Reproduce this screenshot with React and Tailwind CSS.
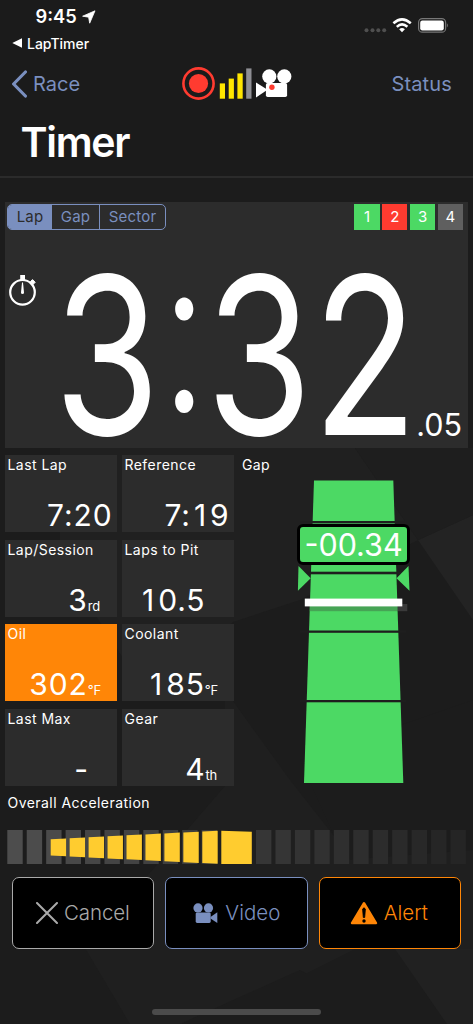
import React from 'react';

const TILES = [
  { label: 'Last Lap', value: '7:20', pad: 'pr-[4.5px]' },
  { label: 'Reference', value: '7:19', pad: 'pr-[4.5px]' },
  { label: 'Lap/Session', value: '3', unit: 'rd', pad: 'pr-[17px]' },
  { label: 'Laps to Pit', value: '10.5', pad: 'pr-[28.5px]' },
  { label: 'Oil', value: '302', unit: '°F', pad: 'pr-[16px]', alert: true },
  { label: 'Coolant', value: '185', unit: '°F', pad: 'pr-[16px]' },
  { label: 'Last Max', value: '-', pad: 'pr-[28px]' },
  { label: 'Gear', value: '4', unit: 'th', pad: 'pr-[17px]' },
];

const SECTORS = [
  { id: 1, color: 'bg-[#4cd964]' },
  { id: 2, color: 'bg-[#ff3b30]' },
  { id: 3, color: 'bg-[#4cd964]' },
  { id: 4, color: 'bg-[#5f5f5f]' },
];

const Backdrop = () => (
  <svg className="absolute inset-0 h-full w-full" viewBox="0 0 473 1024">
    <rect width="473" height="1024" fill="#1c1c1c" />
    <path d="M60 448H355L418 540L300 600L233 622L150 700L60 560Z" fill="#202020" />
    <path d="M418 540L473 515V620Z" fill="#232323" />
    <path d="M418 540L473 515V448H355Z" fill="#1e1e1e" />
    <path d="M225 690L290 780L345 850L473 830V1024H400L300 970L180 1024H130L85 948L225 786Z" fill="#1f1f1f" />
    <path d="M233 1010L355 949H395L447 1024H233Z" fill="#1c1c1c" />
    <path d="M395 949H473V1024H447Z" fill="#212121" />
    <path d="M300 760L473 700V850L345 860Z" fill="#1c1c1c" />
  </svg>
);

const StatusBar = () => (
  <div className="flex h-[62px] justify-between">
    <div className="pl-3">
      <div className="flex h-[33px] items-center pl-[23.5px]">
        <span className="text-[18.3px] font-semibold">9:45</span>
        <svg className="ml-[5px] h-[14px] w-[14px]" viewBox="0 0 14 14">
          <path d="M13 0.8L0.6 6.2L6.6 7.2L7.7 13.2Z" fill="#fff" stroke="#fff" strokeWidth="0.8" strokeLinejoin="round" />
        </svg>
      </div>
      <div className="flex h-[20px] items-center gap-[5px]">
        <svg className="h-[10px] w-[10px]" viewBox="0 0 10 10"><path d="M0.3 5L10 0.2V9.8Z" fill="#fff" /></svg>
        <span className="text-[14px] font-medium tracking-[0px]">LapTimer</span>
      </div>
    </div>
    <svg className="mt-[14px] mr-[23px] h-[22px] w-[86px]" viewBox="364 14 86 22">
      <g fill="#4f4f4f">
        <circle cx="366.5" cy="30.3" r="2" />
        <circle cx="372.5" cy="30.3" r="2" />
        <circle cx="378.3" cy="30.3" r="2" />
        <circle cx="384.2" cy="30.3" r="2" />
      </g>
      <g fill="none" stroke="#fff" strokeWidth="2.5">
        <path d="M393.4 23.3Q402 15.5 410.8 23.3" />
        <path d="M396.8 26.8Q402 22 407.4 26.8" />
      </g>
      <path d="M399.2 29.3Q402 26.8 404.9 29.3L402 32.2Z" fill="#fff" />
      <rect x="418.6" y="18.6" width="27" height="13.6" rx="3.8" fill="none" stroke="#777" strokeWidth="1.2" />
      <rect x="420.2" y="20.5" width="23.6" height="10" rx="2.2" fill="#fff" />
      <path d="M446.9 23.3Q448.8 25.4 446.9 27.5Z" fill="#777" />
    </svg>
  </div>
);

const NavBar = () => (
  <div className="flex h-[44px] items-center justify-between text-[20px] text-[#7a8fbf]">
    <div className="flex w-[180px] items-center pl-[11px]">
      <svg className="h-[28px] w-[17px]" viewBox="0 0 17 28">
        <path d="M14.4 2L2.6 14L14.4 26" fill="none" stroke="#7a8fbf" strokeWidth="3.2" strokeLinecap="round" strokeLinejoin="round" />
      </svg>
      <span className="ml-[5px]">Race</span>
    </div>
    <svg className="h-[36px] w-[112px]" viewBox="181 66 112 36">
      <circle cx="198.5" cy="83.5" r="15.1" fill="none" stroke="#ff3b30" strokeWidth="2.6" />
      <circle cx="198.5" cy="83.5" r="9.6" fill="#ff3b30" />
      <g fill="#ffe600">
        <rect x="219.8" y="83.4" width="5.2" height="15.3" />
        <rect x="228.7" y="78.6" width="5.2" height="20.1" />
        <rect x="237.4" y="73.4" width="5.3" height="25.3" />
      </g>
      <rect x="246.2" y="68.4" width="5.3" height="30.3" fill="#8e8e93" />
      <g fill="#fff">
        <circle cx="269.3" cy="76.4" r="7.1" />
        <circle cx="284.3" cy="76.4" r="7.1" />
        <rect x="265.9" y="83" width="21.2" height="14" rx="1.8" />
        <path d="M256 82.4L266 88.7V90.7L256 97.6Z" />
      </g>
      <circle cx="271.9" cy="87.3" r="2.7" fill="#ff3b30" />
    </svg>
    <div className="w-[180px] pr-[21px] text-right tracking-[0.15px]">Status</div>
  </div>
);

const LapPanel = () => (
  <div className="relative mx-[5px] mt-[24px] h-[246px] bg-[#2c2c2c]">
    <div className="flex justify-between pt-[2px] pr-[5px] pl-[2px]">
      <div className="flex h-[26px] w-[159px] overflow-hidden rounded-[5px] border border-[#7a8fbf] text-[15px] tracking-[0.2px] text-[#7a8fbf]">
        <div className="flex w-[44px] items-center justify-center bg-[#7a8fbf] text-[#2c2c2c]">Lap</div>
        <div className="flex w-[48px] items-center justify-center border-r border-[#7a8fbf]">Gap</div>
        <div className="flex flex-1 items-center justify-center">Sector</div>
      </div>
      <div className="flex gap-[2.5px]">
        {SECTORS.map((s) => (
          <div key={s.id} className={`flex h-[25.5px] w-[25.3px] items-center justify-center text-[15px] ${s.color}`}>{s.id}</div>
        ))}
      </div>
    </div>
    <svg className="absolute top-[72px] left-[3px] h-[34px] w-[30px]" viewBox="8 274 30 34">
      <circle cx="22.5" cy="292.3" r="12.3" fill="none" stroke="#fff" strokeWidth="2.2" />
      <rect x="20.2" y="275" width="4.8" height="5.5" fill="#fff" />
      <path d="M30.3 281.8L32.5 279.6L35.2 282.3L33 284.5Z" fill="#fff" stroke="#fff" />
      <path d="M22 282.5H23L24 292.5A1.5 1.5 0 0 1 21 292.5Z" fill="#fff" />
    </svg>
    <div className="absolute top-[43px] left-[48.5px] origin-left scale-x-[0.78] text-[220px] leading-[220px] whitespace-nowrap">
      3<span className="relative -top-[23px] font-light tracking-[-3px]">:</span><span className="tracking-[1px]">32</span>
    </div>
    <div className="absolute right-[6px] bottom-[4px] text-[30.5px] leading-[38px] font-normal">.05</div>
  </div>
);

// pad the narrow 1 so that digits keep a steady pitch
const Digits = ({ value }) =>
  value.split(/(1)/).map((part, i) => (part === '1' ? <span key={i} className="px-[3px]">1</span> : part));

const Tile = ({ label, value, unit, pad, alert }) => (
  <div className={`flex h-[77px] flex-col justify-between ${alert ? 'bg-[#ff8607]' : 'bg-[#2c2c2c]'}`}>
    <span className="pl-[2.5px] text-[14px] leading-[20px] tracking-[0.45px]">{label}</span>
    <div className={`flex h-[34px] items-baseline justify-end ${pad}`}>
      <span className="text-[30px] leading-[34px] font-normal tracking-[0.9px] whitespace-nowrap">
        <Digits value={value} />
      </span>
      {unit && <span className="text-[13px] leading-none font-normal tracking-[-0.2px]">{unit}</span>}
    </div>
  </div>
);

const GapGauge = () => (
  <div className="relative flex-1">
    <div className="pl-[3px] text-[14px] leading-[20px] tracking-[0.35px]">Gap</div>
    <svg className="absolute top-0 left-0 h-[331px] w-[229px]" viewBox="239 455 229 331">
      <path d="M314 480.5H393.3L403.3 783H304Z" fill="#4cd964" />
      <g fill="#1e1e1e">
        <rect x="300" y="521" width="106" height="2.4" />
        <rect x="300" y="571.7" width="106" height="2.6" />
        <rect x="300" y="630.5" width="106" height="2.3" />
        <rect x="300" y="700" width="106" height="2.3" />
      </g>
      <path d="M298.5 566L310.7 578.3L297.9 590.7Z" fill="#4cd964" />
      <path d="M408.5 566L396.5 578.3L409.5 590.7Z" fill="#4cd964" />
      <rect x="397.4" y="604" width="9.9" height="7.2" fill="#3a3a3a" />
      <rect x="309.8" y="604" width="87.6" height="7.2" fill="#46a455" />
      <rect x="304.8" y="598.6" width="97.5" height="7.8" fill="#fff" />
    </svg>
    <div className="absolute top-[69px] left-[58px] flex h-[41px] w-[113px] items-center justify-center rounded-[6px] border-[3px] border-black bg-[#4cd964] text-[30.5px] font-normal whitespace-nowrap text-white">
      -00.34
    </div>
  </div>
);

// the filled part widens linearly towards the current reading
const topAt = (x) => 9.3 - ((x - 50.7) * 8.6) / 166;
const bottomAt = (x) => 25.6 + ((x - 50.7) * 8.2) / 166;

const Acceleration = () => {
  const cells = Array.from({ length: 22 }, (_, i) => (i < 11 ? 7.3 + i * 19.43 : 256 + (i - 11) * 19.45));
  const bars = Array.from({ length: 9 }, (_, i) => 50.7 + i * 18.95);

  return (
    <div className="pt-[7px]">
      <p className="pl-[7.5px] text-[14px] leading-[20px] tracking-[0.45px]">Overall Acceleration</p>
      <svg className="mt-[17px] h-[34px] w-[473px]" viewBox="0 0 473 34">
        {cells.map((x) => {
          const shade = Math.round(78 - x * 0.092);
          return <rect key={x} x={x} y="0" width="15.4" height="34" fill={`rgb(${shade},${shade},${shade})`} />;
        })}
        {bars.map((x) => (
          <path key={x} d={`M${x} ${topAt(x)}L${x + 15.4} ${topAt(x + 15.4)}V${bottomAt(x + 15.4)}L${x} ${bottomAt(x)}Z`} fill="#ffcc2f" />
        ))}
        <path d="M221.3 0.8L251.8 1.8V34H221.3Z" fill="#ffcc2f" />
      </svg>
    </div>
  );
};

const Actions = () => (
  <div className="mx-[12px] mt-[13px] grid h-[72px] grid-cols-3 gap-[11px] text-[20.5px] font-[350]">
    <button className="flex items-center rounded-[7px] border border-[#aaaaaa] bg-black pl-[23px] text-[#aaaaaa]">
      <svg className="h-[22px] w-[22px]" viewBox="0 0 22 22"><path d="M1 1L21 21M21 1L1 21" stroke="#aaa" strokeWidth="2" strokeLinecap="round" /></svg>
      <span className="ml-[6px] tracking-[-0.1px]">Cancel</span>
    </button>
    <button className="flex items-center rounded-[7px] border border-[#7a8fbf] bg-black pl-[27px] text-[#7a8fbf]">
      <svg className="h-[20px] w-[25px]" viewBox="0 0 25 20" fill="#7a8fbf">
        <circle cx="5" cy="4.9" r="4.6" />
        <circle cx="15.5" cy="4.9" r="4.6" />
        <rect x="2.7" y="9.4" width="15" height="10.5" rx="1.4" />
        <path d="M17.5 14L24.3 9.3V20L17.5 15.5Z" />
      </svg>
      <span className="ml-[7px]">Video</span>
    </button>
    <button className="flex items-center rounded-[7px] border border-[#ff8607] bg-black pl-[30px] text-[#ff8607]">
      <svg className="h-[24px] w-[28px]" viewBox="0 0 28 24">
        <path d="M14 2.2L26 22H2Z" fill="#ff8607" stroke="#ff8607" strokeWidth="2.4" strokeLinejoin="round" />
        <path d="M12.6 8Q14 5.6 15.4 8L14.7 16.5H13.3Z" fill="#000" stroke="#000" strokeWidth="0.8" />
        <circle cx="14" cy="20" r="1.7" fill="#000" />
      </svg>
      <span className="ml-[6px]">Alert</span>
    </button>
  </div>
);

const App = () => {
  return (
    <div className="relative h-[1024px] w-[473px] overflow-hidden bg-[#1c1c1c] font-['Inter',sans-serif] text-white">
      <Backdrop />
      <div className="relative flex h-full flex-col">
        <div className="h-[178px] border-b-2 border-[#2b2b2b] bg-[#1b1b1b]">
          <StatusBar />
          <NavBar />
          <h1 className="pl-[20.5px] text-[41px] leading-[72px] font-semibold tracking-[-1.3px]">Timer</h1>
        </div>
        <LapPanel />
        <div className="mt-[7px] flex h-[331px] gap-[5px] pl-[5px]">
          <div className="grid w-[229px] grid-cols-2 content-start gap-x-[5px] gap-y-[7.6px]">
            {TILES.map((tile) => (
              <Tile key={tile.label} {...tile} />
            ))}
          </div>
          <GapGauge />
        </div>
        <Acceleration />
        <Actions />
        <div className="mx-auto mt-auto mb-[9px] h-[6px] w-[169px] rounded-full bg-[#4b4b4b]" />
      </div>
    </div>
  );
};

export default App;
